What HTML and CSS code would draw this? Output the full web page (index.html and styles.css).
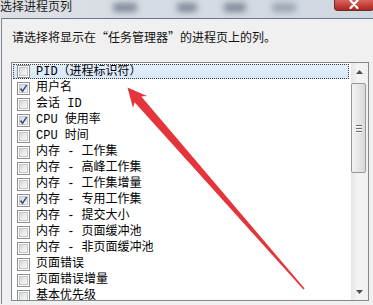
FILE: index.html
```html
<!DOCTYPE html>
<html lang="zh-CN">
<head>
<meta charset="utf-8">
<link rel="stylesheet" href="styles.css">
</head>
<body>
<div class="titlebar">
  <span class="title-text">选择进程页列</span>
  <div class="blobs">
    <span class="blob b1"></span>
    <span class="blob b2"></span>
    <span class="blob b3"></span>
    <span class="blob b4"></span>
  </div>
  <div class="close">
    <svg width="14" height="9" viewBox="0 0 14 9"><path d="M3.5 0.5 L10.5 8 M10.5 0.5 L3.5 8" stroke="#fff" stroke-width="2.2" stroke-linecap="round"/></svg>
  </div>
</div>
<div class="dialog">
  <p class="prompt">请选择将显示在“任务管理器”的进程页上的列。</p>
  <div class="listbox">
    <ul class="items">
      <li class="row selected"><span class="cb"></span><span class="label">PID（进程标识符）</span></li>
      <li class="row"><span class="cb checked"><svg viewBox="0 0 13 13"><path d="M3.5 6.5 L5.6 9.2 L9.6 3.2"/></svg></span><span class="label">用户名</span></li>
      <li class="row"><span class="cb"></span><span class="label">会话 ID</span></li>
      <li class="row"><span class="cb checked"><svg viewBox="0 0 13 13"><path d="M3.5 6.5 L5.6 9.2 L9.6 3.2"/></svg></span><span class="label">CPU 使用率</span></li>
      <li class="row"><span class="cb"></span><span class="label">CPU 时间</span></li>
      <li class="row"><span class="cb"></span><span class="label">内存 - 工作集</span></li>
      <li class="row"><span class="cb"></span><span class="label">内存 - 高峰工作集</span></li>
      <li class="row"><span class="cb"></span><span class="label">内存 - 工作集增量</span></li>
      <li class="row"><span class="cb checked"><svg viewBox="0 0 13 13"><path d="M3.5 6.5 L5.6 9.2 L9.6 3.2"/></svg></span><span class="label">内存 - 专用工作集</span></li>
      <li class="row"><span class="cb"></span><span class="label">内存 - 提交大小</span></li>
      <li class="row"><span class="cb"></span><span class="label">内存 - 页面缓冲池</span></li>
      <li class="row"><span class="cb"></span><span class="label">内存 - 非页面缓冲池</span></li>
      <li class="row"><span class="cb"></span><span class="label">页面错误</span></li>
      <li class="row"><span class="cb"></span><span class="label">页面错误增量</span></li>
      <li class="row"><span class="cb"></span><span class="label">基本优先级</span></li>
    </ul>
    <div class="scrollbar">
      <div class="sb-btn"><svg width="7" height="4" viewBox="0 0 7 4"><path d="M0 4 L3.5 0 L7 4 Z" fill="#4d4d4d"/></svg></div>
      <div class="sb-track">
        <div class="thumb"><span class="grip"></span><span class="grip"></span><span class="grip"></span></div>
      </div>
      <div class="sb-btn"><svg width="7" height="4" viewBox="0 0 7 4"><path d="M0 0 L7 0 L3.5 4 Z" fill="#4d4d4d"/></svg></div>
    </div>
  </div>
</div>
<svg class="arrow" width="373" height="305" viewBox="0 0 373 305">
  <polygon points="127.5,87.5 147,96 141.3,96.6 304.6,288.6 303.4,289.4 134.6,102.3 133,108" fill="#e4353c"/>
</svg>
</body>
</html>
```
FILE: styles.css
```css
html, body {
  margin: 0;
  padding: 0;
}
body {
  width: 373px;
  height: 305px;
  overflow: hidden;
  position: relative;
  background: #f0f0f0;
  font-family: "Liberation Mono", "Noto Sans CJK SC", monospace;
  font-size: 12px;
  color: #000;
}
.titlebar {
  height: 18px;
  display: flex;
  align-items: flex-start;
  background: linear-gradient(90deg, #dde1e6 0%, #d6dce3 40%, #cfd7e1 100%);
  overflow: hidden;
}
.title-text {
  font-family: "Noto Sans CJK SC", sans-serif;
  font-size: 12px;
  line-height: 12px;
  margin-top: 0;
  color: #1b1b1b;
  width: 100px;
  flex: none;
}
.blobs {
  display: flex;
  margin-top: 3px;
  flex: 1;
}
.blob {
  display: block;
  height: 9px;
  background: #7f8a98;
  filter: blur(3px);
  border-radius: 3px;
}
.b1 { width: 24px; margin-left: 13px; }
.b2 { width: 20px; margin-left: 40px; }
.b3 { width: 22px; margin-left: 27px; }
.b4 { width: 24px; margin-left: 26px; background: #9aa4b1; }
.close {
  flex: none;
  width: 40px;
  height: 11px;
  margin-right: -1px;
  background: linear-gradient(180deg, #d5665c 0%, #c23d33 60%, #a92a22 100%);
  border: 1px solid #6e2a26;
  border-top: none;
  border-radius: 0 0 4px 4px;
  display: flex;
  justify-content: center;
  align-items: flex-start;
  box-sizing: border-box;
}
.dialog {
  margin-left: 1px;
  border-left: 1px solid #7d8794;
  border-top: 1px solid #6d7886;
  padding: 0 3px 0 9px;
  height: 286px;
  box-sizing: border-box;
}
.prompt {
  margin: 0;
  padding: 10px 0 0 1px;
  line-height: 16px;
  height: 16px;
  font-family: "Noto Sans CJK SC", sans-serif;
  color: #111;
}
.listbox {
  margin-top: 17px;
  width: 358px;
  height: 239px;
  box-sizing: border-box;
  border: 1px solid #828790;
  background: #fff;
  display: flex;
}
.items {
  list-style: none;
  margin: 0;
  padding: 1px 0 0 0;
  flex: 1;
  overflow: hidden;
}
.row {
  height: 16px;
  margin: 0 2px 0 1px;
  display: flex;
  align-items: center;
  gap: 6px;
  padding-left: 4px;
  box-sizing: border-box;
  line-height: 16px;
  white-space: nowrap;
}
.row.selected {
  height: 15px;
  margin-bottom: 1px;
  background: linear-gradient(180deg, #e4effb, #d6e7fa);
  outline: 1px dotted #3c3c3c;
  outline-offset: -1px;
}
.cb {
  width: 13px;
  height: 13px;
  box-sizing: border-box;
  border: 1px solid #8e8f8f;
  background: #fff;
  position: relative;
  flex: none;
}
.cb::before {
  content: "";
  position: absolute;
  left: 1px;
  top: 1px;
  right: 1px;
  bottom: 1px;
  border: 1px solid #c2c4c6;
  background: linear-gradient(135deg, #d8d9da 0%, #eceded 60%, #f7f7f7 100%);
}
.cb svg {
  position: absolute;
  left: -1px;
  top: -1px;
  width: 13px;
  height: 13px;
}
.cb svg path {
  fill: none;
  stroke: #344a86;
  stroke-width: 1.5;
}
.label {
  color: #000;
}
.scrollbar {
  width: 17px;
  flex: none;
  display: flex;
  flex-direction: column;
  background: linear-gradient(90deg, #e6e6e6, #f4f4f4 40%, #f0f0f0);
}
.sb-btn {
  height: 17px;
  display: flex;
  justify-content: center;
  align-items: center;
  flex: none;
}
.sb-track {
  flex: 1;
  padding-top: 3px;
}
.thumb {
  width: 15px;
  height: 90px;
  box-sizing: border-box;
  border: 1px solid #979797;
  border-radius: 2px;
  background: linear-gradient(90deg, #f3f3f3, #e6e6e6 50%, #d9d9d9);
  display: flex;
  flex-direction: column;
  justify-content: center;
  align-items: center;
  gap: 2px;
}
.grip {
  display: block;
  width: 6px;
  height: 1px;
  background: #6a6a6a;
  box-shadow: 0 1px 0 #fff;
}
.arrow {
  position: absolute;
  left: 0;
  top: 0;
  pointer-events: none;
}
```
